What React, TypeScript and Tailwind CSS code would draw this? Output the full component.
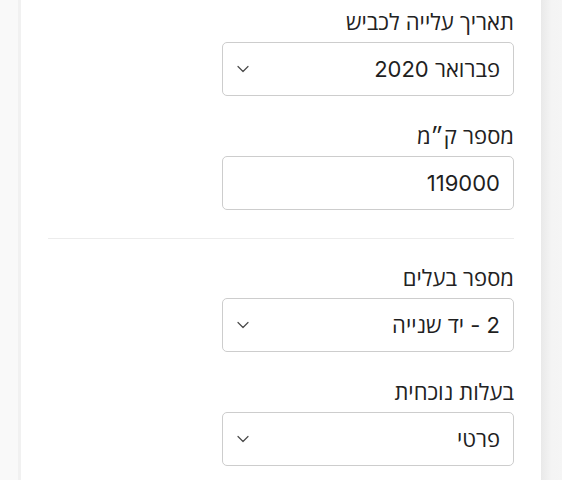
type Option = { label: string; value: string };

function FieldLabel({ children }: { children: React.ReactNode }) {
  return (
    <label className="block text-[22px] leading-[28px] text-[#222222] mb-[6px]">
      {children}
    </label>
  );
}

function Chevron() {
  return (
    <svg width="12" height="8" viewBox="0 0 12 8" fill="none" className="shrink-0">
      <polyline
        points="1,1.5 6,6.5 11,1.5"
        stroke="#4a4a4a"
        strokeWidth="1.2"
        strokeLinecap="round"
        strokeLinejoin="round"
      />
    </svg>
  );
}

function SelectBox({ value }: { value: string }) {
  return (
    <div className="flex h-[54px] w-[292px] items-center rounded-[5px] border border-[#cdcdcd] bg-white pr-[13px] pl-[14px]">
      <span className="flex-1 text-[22px] text-[#1f1f1f]">{value}</span>
      <Chevron />
    </div>
  );
}

function TextBox({ value }: { value: string }) {
  return (
    <div className="flex h-[54px] w-[292px] items-center rounded-[5px] border border-[#cdcdcd] bg-white px-[13px]">
      <span className="text-[22px] text-[#1f1f1f]">{value}</span>
    </div>
  );
}

const ownership: Option[] = [
  { label: "פרטי", value: "private" },
  { label: "ליסינג", value: "leasing" },
];

export default function App() {
  return (
    <div
      dir="ltr"
      className="flex h-[480px] w-full overflow-hidden bg-white"
      style={{ fontFamily: "Inter, 'Open Sans', 'Liberation Sans', sans-serif" }}
    >
      {/* side gutters */}
      <div className="w-[21px] shrink-0 border-r-[3px] border-[#f1f1f1] bg-[#f9f9f9]" />

      <div dir="rtl" className="flex-1 px-[27px] pt-[8px]">
        <div className="mb-[26px]">
          <FieldLabel>תאריך עלייה לכביש</FieldLabel>
          <SelectBox value="פברואר 2020" />
        </div>
        <div>
          <FieldLabel>מספר ק״מ</FieldLabel>
          <TextBox value="119000" />
        </div>

        <hr className="mt-[28px] mb-[25px] border-t border-[#ececec]" />

        <div className="mb-[26px]">
          <FieldLabel>מספר בעלים</FieldLabel>
          <SelectBox value="2 - יד שנייה" />
        </div>
        <div>
          <FieldLabel>בעלות נוכחית</FieldLabel>
          <SelectBox value={ownership[0].label} />
        </div>
      </div>

      <div className="w-[21px] shrink-0 bg-gradient-to-r from-[#e9e9e9] via-[#f4f4f4] to-[#f5f5f5]" />
    </div>
  );
}
